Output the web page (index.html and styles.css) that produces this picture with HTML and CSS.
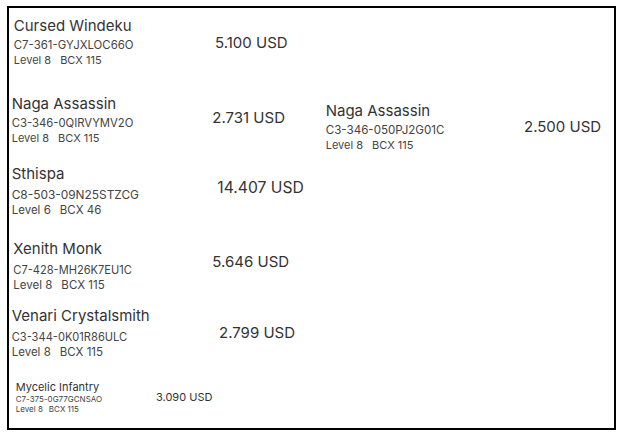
FILE: index.html
```html
<!DOCTYPE html>
<html lang="en">
<head>
<meta charset="utf-8">
<title>Cards</title>
<link rel="stylesheet" href="styles.css">
</head>
<body>
<div class="frame">
  <div class="card c1">
    <div class="info">
      <div class="name">Cursed Windeku</div>
      <div class="code">C7-361-GYJXLOC66O</div>
      <div class="meta"><span>Level 8</span><span>BCX 115</span></div>
    </div>
    <div class="price">5.100 USD</div>
  </div>
  <div class="row">
    <div class="card c2">
      <div class="info">
        <div class="name">Naga Assassin</div>
        <div class="code">C3-346-0QIRVYMV2O</div>
        <div class="meta"><span>Level 8</span><span>BCX 115</span></div>
      </div>
      <div class="price">2.731 USD</div>
    </div>
    <div class="card c2r">
      <div class="info">
        <div class="name">Naga Assassin</div>
        <div class="code">C3-346-050PJ2G01C</div>
        <div class="meta"><span>Level 8</span><span>BCX 115</span></div>
      </div>
      <div class="price">2.500 USD</div>
    </div>
  </div>
  <div class="card c3">
    <div class="info">
      <div class="name">Sthispa</div>
      <div class="code">C8-503-09N25STZCG</div>
      <div class="meta"><span>Level 6</span><span>BCX 46</span></div>
    </div>
    <div class="price">14.407 USD</div>
  </div>
  <div class="card c4">
    <div class="info">
      <div class="name">Xenith Monk</div>
      <div class="code">C7-428-MH26K7EU1C</div>
      <div class="meta"><span>Level 8</span><span>BCX 115</span></div>
    </div>
    <div class="price">5.646 USD</div>
  </div>
  <div class="card c5">
    <div class="info">
      <div class="name">Venari Crystalsmith</div>
      <div class="code">C3-344-0K01R86ULC</div>
      <div class="meta"><span>Level 8</span><span>BCX 115</span></div>
    </div>
    <div class="price">2.799 USD</div>
  </div>
  <div class="card c6 small">
    <div class="info">
      <div class="name">Mycelic Infantry</div>
      <div class="code">C7-375-0G77GCNSAO</div>
      <div class="meta"><span>Level 8</span><span>BCX 115</span></div>
    </div>
    <div class="price">3.090 USD</div>
  </div>
</div>
</body>
</html>
```

FILE: styles.css
```css
* { box-sizing: border-box; }
html, body { margin: 0; padding: 0; background: #fff; }
body {
  font-family: Inter, "Noto Sans", "Liberation Sans", sans-serif;
  color: #333;
}
.frame {
  margin: 6px 0 0 7px;
  width: 609px;
  height: 424px;
  border: 2px solid #000;
  overflow: hidden;
}
.row {
  display: flex;
  align-items: flex-start;
  margin-top: 26.5px;
}
.card {
  --ml: 3px;
  --mt: 0px;
  --iw: 200px;
  --pt: 15px;
  --gap: 0px;
  --code: 11.4px;
  --meta: 11px;
  --name: 15px;
  --price: 15px;
  display: flex;
  align-items: flex-start;
  margin-top: var(--mt);
  padding-left: var(--ml);
}
.info { width: var(--iw); flex: none; }
.name {
  font-size: var(--name);
  line-height: 20px;
  margin-bottom: var(--gap);
  color: #333;
}
.code {
  font-size: var(--code);
  line-height: 16px;
  color: #444;
}
.meta {
  font-size: var(--meta);
  line-height: 14px;
  color: #444;
}
.meta span + span { margin-left: 9px; }
.price {
  font-size: var(--price);
  line-height: 20px;
  margin-top: var(--pt);
  color: #333;
  white-space: nowrap;
}

.c1 { --ml: 4.8px; --mt: 8.25px; --iw: 201.2px; --pt: 16.5px; --gap: 0.75px; }
.c2 { --ml: 2.7px; --iw: 200.6px; --pt: 14.9px; --gap: 1.75px; --code: 11.3px; width: 316.7px; flex: none; }
.c2r { --ml: 0px; --mt: 7.7px; --iw: 198.3px; --pt: 15.9px; --gap: 1px; --code: 11.6px; }
.c3 { --ml: 2.7px; --mt: 12.3px; --iw: 205.6px; --pt: 13.4px; --gap: 2.75px; --code: 11.9px; --meta: 11.5px; --price: 15.7px; }
.c4 { --ml: 4.3px; --mt: 21.55px; --iw: 199px; --pt: 13.3px; --gap: 3.15px; --code: 11.1px; --meta: 11.5px; }
.c5 { --ml: 2.7px; --mt: 13.9px; --iw: 207.3px; --pt: 16.85px; --gap: 2.8px; --code: 11.1px; --meta: 11.5px; }
.c6 { --ml: 6.7px; --mt: 21px; --iw: 140.3px; --pt: 10px; --gap: 0.7px; }
.small .name { font-size: 11px; line-height: 14px; }
.small .code { font-size: 8px; line-height: 10px; }
.small .meta { font-size: 8px; line-height: 10px; }
.small .meta span + span { margin-left: 6px; }
.small .price { font-size: 11px; line-height: 14px; }
```
